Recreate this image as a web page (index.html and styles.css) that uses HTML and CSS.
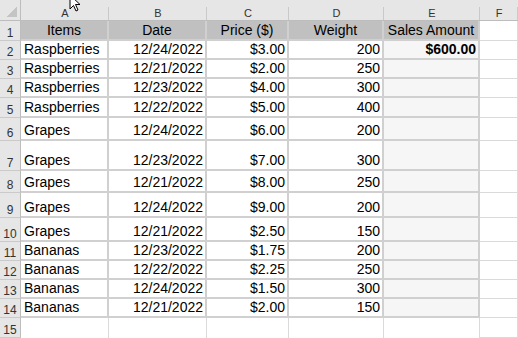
FILE: index.html
```html
<!DOCTYPE html>
<html lang="en">
<head>
    <meta charset="UTF-8">
    <title>Sales sheet</title>
    <link rel="stylesheet" href="styles.css">
</head>
<body>
<div class="sheet">
    <div class="corner"></div>
    <div class="col-head">A</div>
    <div class="col-head">B</div>
    <div class="col-head">C</div>
    <div class="col-head">D</div>
    <div class="col-head">E</div>
    <div class="col-head last">F</div>

    <div class="row-head">1</div>
    <div class="cell title">Items</div>
    <div class="cell title">Date</div>
    <div class="cell title">Price ($)</div>
    <div class="cell title">Weight</div>
    <div class="cell title">Sales Amount</div>
    <div class="cell blank"></div>

    <div class="row-head">2</div>
    <div class="cell">Raspberries</div>
    <div class="cell num">12/24/2022</div>
    <div class="cell num">$3.00</div>
    <div class="cell num">200</div>
    <div class="cell num total"><b>$600.00</b></div>
    <div class="cell blank"></div>

    <div class="row-head">3</div>
    <div class="cell">Raspberries</div>
    <div class="cell num">12/21/2022</div>
    <div class="cell num">$2.00</div>
    <div class="cell num">250</div>
    <div class="cell total"></div>
    <div class="cell blank"></div>

    <div class="row-head">4</div>
    <div class="cell">Raspberries</div>
    <div class="cell num">12/23/2022</div>
    <div class="cell num">$4.00</div>
    <div class="cell num">300</div>
    <div class="cell total"></div>
    <div class="cell blank"></div>

    <div class="row-head">5</div>
    <div class="cell">Raspberries</div>
    <div class="cell num">12/22/2022</div>
    <div class="cell num">$5.00</div>
    <div class="cell num">400</div>
    <div class="cell total"></div>
    <div class="cell blank"></div>

    <div class="row-head">6</div>
    <div class="cell">Grapes</div>
    <div class="cell num">12/24/2022</div>
    <div class="cell num">$6.00</div>
    <div class="cell num">200</div>
    <div class="cell total"></div>
    <div class="cell blank"></div>

    <div class="row-head">7</div>
    <div class="cell">Grapes</div>
    <div class="cell num">12/23/2022</div>
    <div class="cell num">$7.00</div>
    <div class="cell num">300</div>
    <div class="cell total"></div>
    <div class="cell blank"></div>

    <div class="row-head">8</div>
    <div class="cell">Grapes</div>
    <div class="cell num">12/21/2022</div>
    <div class="cell num">$8.00</div>
    <div class="cell num">250</div>
    <div class="cell total"></div>
    <div class="cell blank"></div>

    <div class="row-head">9</div>
    <div class="cell">Grapes</div>
    <div class="cell num">12/24/2022</div>
    <div class="cell num">$9.00</div>
    <div class="cell num">200</div>
    <div class="cell total"></div>
    <div class="cell blank"></div>

    <div class="row-head">10</div>
    <div class="cell">Grapes</div>
    <div class="cell num">12/21/2022</div>
    <div class="cell num">$2.50</div>
    <div class="cell num">150</div>
    <div class="cell total"></div>
    <div class="cell blank"></div>

    <div class="row-head">11</div>
    <div class="cell">Bananas</div>
    <div class="cell num">12/23/2022</div>
    <div class="cell num">$1.75</div>
    <div class="cell num">200</div>
    <div class="cell total"></div>
    <div class="cell blank"></div>

    <div class="row-head">12</div>
    <div class="cell">Bananas</div>
    <div class="cell num">12/22/2022</div>
    <div class="cell num">$2.25</div>
    <div class="cell num">250</div>
    <div class="cell total"></div>
    <div class="cell blank"></div>

    <div class="row-head">13</div>
    <div class="cell">Bananas</div>
    <div class="cell num">12/24/2022</div>
    <div class="cell num">$1.50</div>
    <div class="cell num">300</div>
    <div class="cell total"></div>
    <div class="cell blank"></div>

    <div class="row-head">14</div>
    <div class="cell">Bananas</div>
    <div class="cell num">12/21/2022</div>
    <div class="cell num">$2.00</div>
    <div class="cell num">150</div>
    <div class="cell total"></div>
    <div class="cell blank"></div>

    <div class="row-head">15</div>
    <div class="cell empty"></div>
    <div class="cell empty"></div>
    <div class="cell empty"></div>
    <div class="cell empty"></div>
    <div class="cell empty"></div>
    <div class="cell blank"></div>
</div>

<svg class="pointer" width="14" height="20" viewBox="0 0 14 20">
    <path d="M1 1 L1 15 L4.5 11.5 L7 17 L9 16 L6.5 10.5 L11 10.5 Z" fill="#fff" stroke="#000" stroke-width="1"/>
</svg>
</body>
</html>
```

FILE: styles.css
```css
body {
    margin: 0;
    background: #fff;
    font-family: "Liberation Sans", Arial, sans-serif;
    overflow: hidden;
}

.sheet {
    display: grid;
    grid-template-columns: 21px 88px 98px 82px 95px 96px 1fr;
    grid-template-rows: 21px 20px 19px 19px 19px 20px 23px 30px 22px 25px 24px 19px 19px 19px 19px 1fr;
    width: 518px;
    height: 338px;
}

.corner {
    background:
        linear-gradient(135deg, transparent 50%, #c4c4c4 50%) right 3px bottom 3px / 10px 10px no-repeat,
        #e6e6e6;
    border-right: 1px solid #bdbdbd;
    border-bottom: 1px solid #bdbdbd;
}

.col-head {
    background:
        linear-gradient(#c9c9c9, #c9c9c9) right bottom / 1px 13px no-repeat,
        #e6e6e6;
    border-bottom: 1px solid #bdbdbd;
    font-size: 11px;
    color: #333;
    display: flex;
    align-items: center;
    justify-content: center;
    padding-top: 5px;
}

.row-head {
    background: #e6e6e6;
    border-right: 1px solid #bdbdbd;
    border-bottom: 1px solid #cacaca;
    font-size: 12px;
    color: #333;
    display: flex;
    align-items: flex-end;
    justify-content: center;
    padding-bottom: 0;
}

.cell {
    background: #fff;
    border-right: 2px solid #d0d0d0;
    border-bottom: 2px solid #d0d0d0;
    font-size: 14px;
    color: #000;
    display: flex;
    align-items: flex-end;
    padding: 0 2px 1px 3px;
    white-space: nowrap;
    overflow: hidden;
}

.cell.num {
    justify-content: flex-end;
}

.cell.title {
    background: #c0c0c0;
    justify-content: center;
    align-items: center;
    padding: 0;
}

.cell.total {
    background: #f6f6f6;
}

.cell.blank {
    border-right: 1px solid #dadada;
    border-bottom: 1px solid #dadada;
}

.cell.empty {
    border-right: 1px solid #dadada;
    border-bottom: none;
}

.pointer {
    position: absolute;
    left: 69px;
    top: -6px;
}
```
